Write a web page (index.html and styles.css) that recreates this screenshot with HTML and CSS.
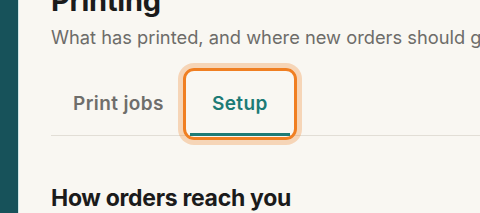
FILE: index.html
```html
<!DOCTYPE html>
<html lang="en">
<head>
    <meta charset="UTF-8">
    <meta name="viewport" content="width=device-width, initial-scale=1.0">
    <title>Printing</title>
    <link rel="stylesheet" href="styles.css">
</head>
<body>
    <div class="app">
        <aside class="sidebar"></aside>
        <main class="content">
            <h1 class="page-title">Printing</h1>
            <p class="page-sub">What has printed, and where new orders should go</p>

            <div class="tabs">
                <button class="tab">Print jobs</button>
                <button class="tab active focused">Setup</button>
            </div>

            <h2 class="section-title">How orders reach you</h2>
        </main>
    </div>
</body>
</html>
```

FILE: styles.css
```css
body {
    margin: 0;
    font-family: Inter, 'Noto Sans', sans-serif;
    background-color: #f9f7f2;
    color: #1b1b1b;
    overflow: hidden;
}

.app {
    display: flex;
    min-height: 213px;
}

.sidebar {
    width: 18px;
    flex-shrink: 0;
    background: #17525a;
    border-right: 1.5px solid #cfe6e6;
}

.content {
    flex: 1;
    padding-left: 32px;
    white-space: nowrap;
    overflow: hidden;
}

.page-title {
    margin: -17px 0 0;
    font-size: 29px;
    line-height: 36px;
    font-weight: 700;
    letter-spacing: -0.2px;
}

.page-sub {
    margin: 6px 0 0;
    font-size: 18.3px;
    line-height: 24px;
    color: #6d6c69;
}

.tabs {
    display: flex;
    gap: 4px;
    margin-top: 26px;
    border-bottom: 1px solid #e2ded6;
}

.tab {
    position: relative;
    border: none;
    background: none;
    padding: 18px 22px 18px;
    margin-bottom: -1px;
    border-bottom: 3px solid transparent;
    font-family: inherit;
    font-size: 19px;
    line-height: 22px;
    font-weight: 600;
    letter-spacing: 0.4px;
    color: #6f6e6b;
    cursor: pointer;
}

.tab.active {
    color: #1d7b76;
    border-bottom-color: #1d7b76;
}

.tab.focused::after {
    content: "";
    position: absolute;
    top: -7px;
    left: -7px;
    right: -7px;
    bottom: -7px;
    border: 3px solid #f07f22;
    border-radius: 11px;
    box-shadow: 0 0 0 5px rgba(240, 127, 34, 0.28);
}

.section-title {
    margin: 48px 0 0;
    font-size: 23px;
    line-height: 28px;
    font-weight: 700;
    letter-spacing: -0.3px;
}
```
